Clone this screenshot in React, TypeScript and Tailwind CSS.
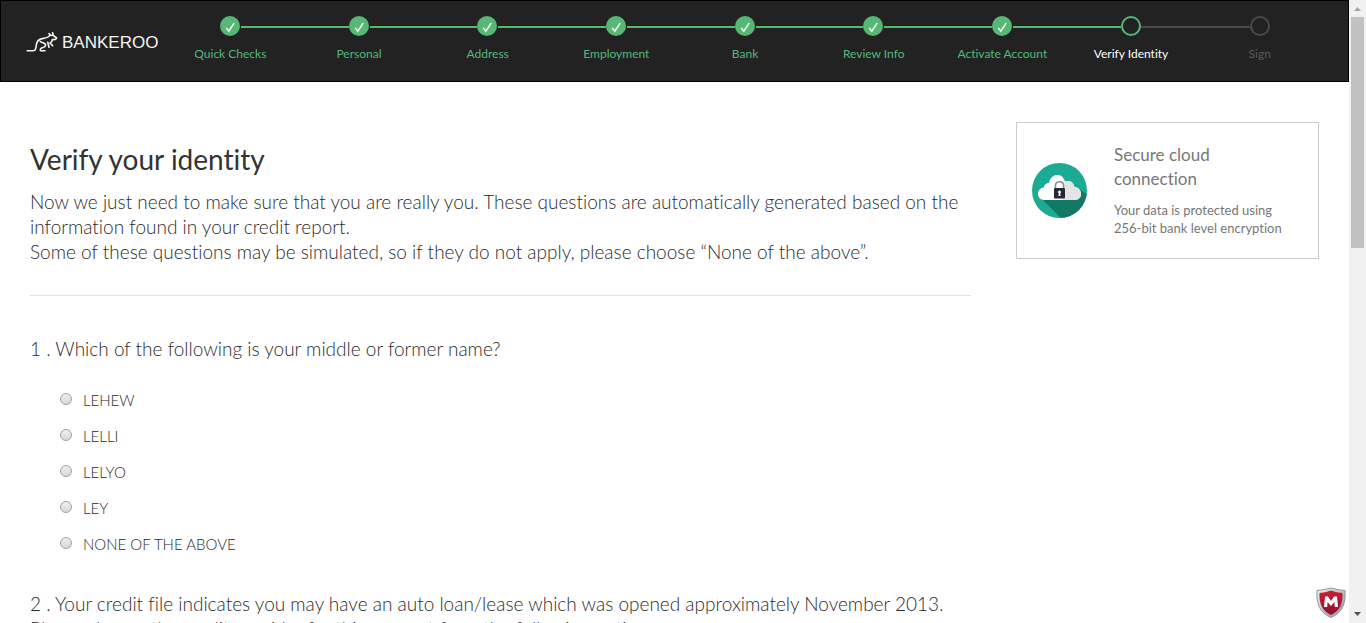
const steps = [
  'Quick Checks',
  'Personal',
  'Address',
  'Employment',
  'Bank',
  'Review Info',
  'Activate Account',
  'Verify Identity',
  'Sign',
];
const current = 7;

const questions = [
  {
    text: '1 . Which of the following is your middle or former name?',
    options: ['LEHEW', 'LELLI', 'LELYO', 'LEY', 'NONE OF THE ABOVE'],
  },
  {
    text: '2 . Your credit file indicates you may have an auto loan/lease which was opened approximately November 2013. Please choose the credit provider for this account from the following options:',
    options: [],
  },
];

function Line({ index }: { index: number }) {
  if (index < 0 || index >= steps.length - 1) return <span className="flex-1" />;
  return <span className={`mt-px h-0.5 flex-1 ${index < current ? 'bg-[#57b876]' : 'bg-[#4a4a4a]'}`} />;
}

function Marker({ index }: { index: number }) {
  if (index < current) {
    return (
      <span className="mr-px flex size-5 items-center justify-center rounded-full bg-[#57b876]">
        <svg viewBox="0 0 20 20" className="size-5" fill="none" stroke="#fff" strokeWidth="1.4">
          <path d="M6.3 11.8 L8.8 15.2 L14.2 7.2" />
        </svg>
      </span>
    );
  }
  return <span className={`size-5 rounded-full border-2 ${index === current ? 'border-[#57b876]' : 'border-[#4a4a4a]'}`} />;
}

function labelColor(index: number) {
  if (index < current) return 'text-[#57b876]';
  return index === current ? 'text-white' : 'text-[#5c5c5c]';
}

function Logo() {
  return (
    <a href="#home" className="flex h-[26px] items-center gap-1 text-[#f4f4f0]">
      <svg viewBox="0 0 32 22" className="h-[22px] w-8" fill="none" stroke="currentColor" strokeWidth="1.6" strokeLinecap="round" strokeLinejoin="round">
        <path d="M1.2 18.800 H7 C9.400 18.800 10 17 10.200 14 C10.500 9.800 12.500 7.200 16 6.600 C19.500 6 22 6 23.800 3.400 M23 1.600 L24.600 3.200 L27.200 3.400 L26.600 0.800 M27.200 3.400 L30.600 6 L29.600 7.400 L26.400 7.600 C26.200 9.400 25.400 10.400 24 11 L26.600 13.600 M21.800 10.400 L23 15.200 M14.200 9.400 C15.500 11.400 20 10.400 19.600 13.400 C19.300 15.400 16.400 15.600 15 16.400 C14 17.200 14.200 18.800 15 18.800 H19" />
      </svg>
      <span className="font-['Liberation_Sans',sans-serif] text-[17px]">BANKEROO</span>
    </a>
  );
}

function CloudIcon() {
  return (
    <svg viewBox="0 0 55 55" className="size-[55px] shrink-0" aria-hidden="true">
      <defs>
        <clipPath id="disc"><circle cx="27.5" cy="27.5" r="27.5" /></clipPath>
      </defs>
      <circle cx="27.5" cy="27.5" r="27.5" fill="#1aab92" />
      <path clipPath="url(#disc)" d="M8 34 L30 56 L56 56 V32 L47 26 Z" fill="#0f7965" />
      <path d="M12.5 37 C8 37 6 34 6 31 C6 27 9 24.5 12 24.5 C12 21.5 14.500 20 17 20 C18 15 21 12 25.500 12 C29 12 31.500 14 33 18.500 C38 16.500 42 20 42.500 24 C47 24.500 49 27.500 49 31 C49 34.500 46.500 37 43 37 Z" fill="#fff" />
      <path d="M31 37 V24 L33 18.500 C38 16.500 42 20 42.500 24 C47 24.500 49 27.500 49 31 C49 34.500 46.500 37 43 37 Z" fill="#e4e4e4" />
      <path d="M23.500 26 V22.500 C23.500 17.500 31.500 17.500 31.500 22.500 V26" fill="none" stroke="#8b8b8b" strokeWidth="1.500" />
      <rect x="22" y="25" width="11" height="10.500" rx="1" fill="#262833" />
      <circle cx="27.500" cy="29" r="1.500" fill="#fff" />
      <path d="M27 29 h1 l.5 4 h-2 Z" fill="#fff" />
    </svg>
  );
}

function Shield() {
  return (
    <svg viewBox="0 0 30 32" className="h-8 w-[30px]" role="img" aria-label="McAfee">
      <defs>
        <linearGradient id="rim" x1="0" x2="1" y2="1"><stop stopColor="#f4f4f4" /><stop offset="1" stopColor="#87939a" /></linearGradient>
        <linearGradient id="red" x2="0" y2="1"><stop stopColor="#c8203a" /><stop offset="1" stopColor="#8f1226" /></linearGradient>
      </defs>
      <path d="M1 3.500 Q8 3 15 1 Q22 3 29 3.500 C30 17 26 26 15 30.500 C4 26 0 17 1 3.500 Z" fill="url(#rim)" stroke="#8c989d" />
      <path d="M3.500 6 Q9 5.500 15 3.500 Q21 5.500 26.500 6 C27 16 24 24 15 28 C6 24 3 16 3.500 6 Z" fill="url(#red)" />
      <path d="M8 20 L9 9.500 H12 L15 14 L18 9.500 H21 L22 20 H18.800 L18.400 15 L15 19 L11.600 15 L11.200 20 Z" fill="#fff" />
    </svg>
  );
}

export default function App() {
  return (
    <div className="flex h-screen bg-white font-['Lato',sans-serif] text-[#2b2b2b] [font-variant-ligatures:none]">
      <div className="min-w-0 flex-1 overflow-y-auto [scrollbar-width:none]">
        <header className="flex h-[82px] items-start border border-black bg-[#222] pt-[15px] pr-6 pl-[25px]">
          <div className="w-[140px] shrink-0 pt-[14px]"><Logo /></div>
          <ol className="flex flex-1">
            {steps.map((step, i) => (
              <li key={step} className="flex flex-1 basis-0 flex-col gap-2">
                <div className="flex items-center"><Line index={i - 1} /><Marker index={i} /><Line index={i} /></div>
                <span className={`text-center text-[12px] leading-5 whitespace-nowrap ${labelColor(i)}`}>{step}</span>
              </li>
            ))}
          </ol>
        </header>

        <div className="flex items-start gap-[45px] pt-10 pr-[30px] pl-[30px]">
          <main className="min-w-0 flex-1">
            <section className="border-b border-[#e2e2e2] pt-[19px] pb-[31px]">
              <h1 className="text-[28px] leading-9 text-[#333]">Verify your identity</h1>
              <p className="mt-3 text-[19px] leading-[25px] font-light">
                Now we just need to make sure that you are really you. These questions are automatically generated based on the information found in your credit report.
                <br />
                Some of these questions may be simulated, so if they do not apply, please choose “None of the above”.
              </p>
            </section>
            <form className="flex flex-col gap-[35px] pt-10">
              {questions.map((q, n) => (
                <fieldset key={q.text}>
                  <legend className="text-[19px] leading-[25px] font-light">{q.text}</legend>
                  {q.options.length > 0 && (
                    <div className="flex flex-col gap-3 pt-[27px] pl-[30px]">
                      {q.options.map((o) => (
                        <label key={o} className="flex items-center text-[15px] leading-6 font-light">
                          <input type="radio" name={`question-${n}`} className="mr-[11px] mb-0.5 size-3 appearance-none rounded-full border border-[#a2a2a2] bg-linear-to-b from-[#eee] to-[#d8d8d8] checked:bg-[#555]" />
                          {o}
                        </label>
                      ))}
                    </div>
                  )}
                </fieldset>
              ))}
            </form>
          </main>
          <aside className="flex w-[303px] shrink-0 items-center gap-[27px] border border-[#ccc] px-[15px] pt-5 pb-[21px] text-[#777]">
            <CloudIcon />
            <div className="pr-3">
              <h2 className="text-[17px] leading-6">Secure cloud connection</h2>
              <p className="mt-2.5 text-[13px] leading-[18px]">Your data is protected using 256-bit bank level encryption</p>
            </div>
          </aside>
        </div>
      </div>

      <div className="flex w-[17px] shrink-0 flex-col items-center justify-between bg-[#f1f1f1]" aria-hidden="true">
        <div className="flex flex-col items-center">
          <svg viewBox="0 0 17 17" className="size-[17px]"><path d="M5 11 L8.500 7 L12 11 Z" fill="#a3a3a3" /></svg>
          <div className="h-[231px] w-[13px] bg-[#c1c1c1]" />
        </div>
        <svg viewBox="0 0 17 17" className="size-[17px]"><path d="M5 6 L8.500 10 L12 6 Z" fill="#505050" /></svg>
      </div>

      <div className="fixed right-5 bottom-1"><Shield /></div>
    </div>
  );
}
